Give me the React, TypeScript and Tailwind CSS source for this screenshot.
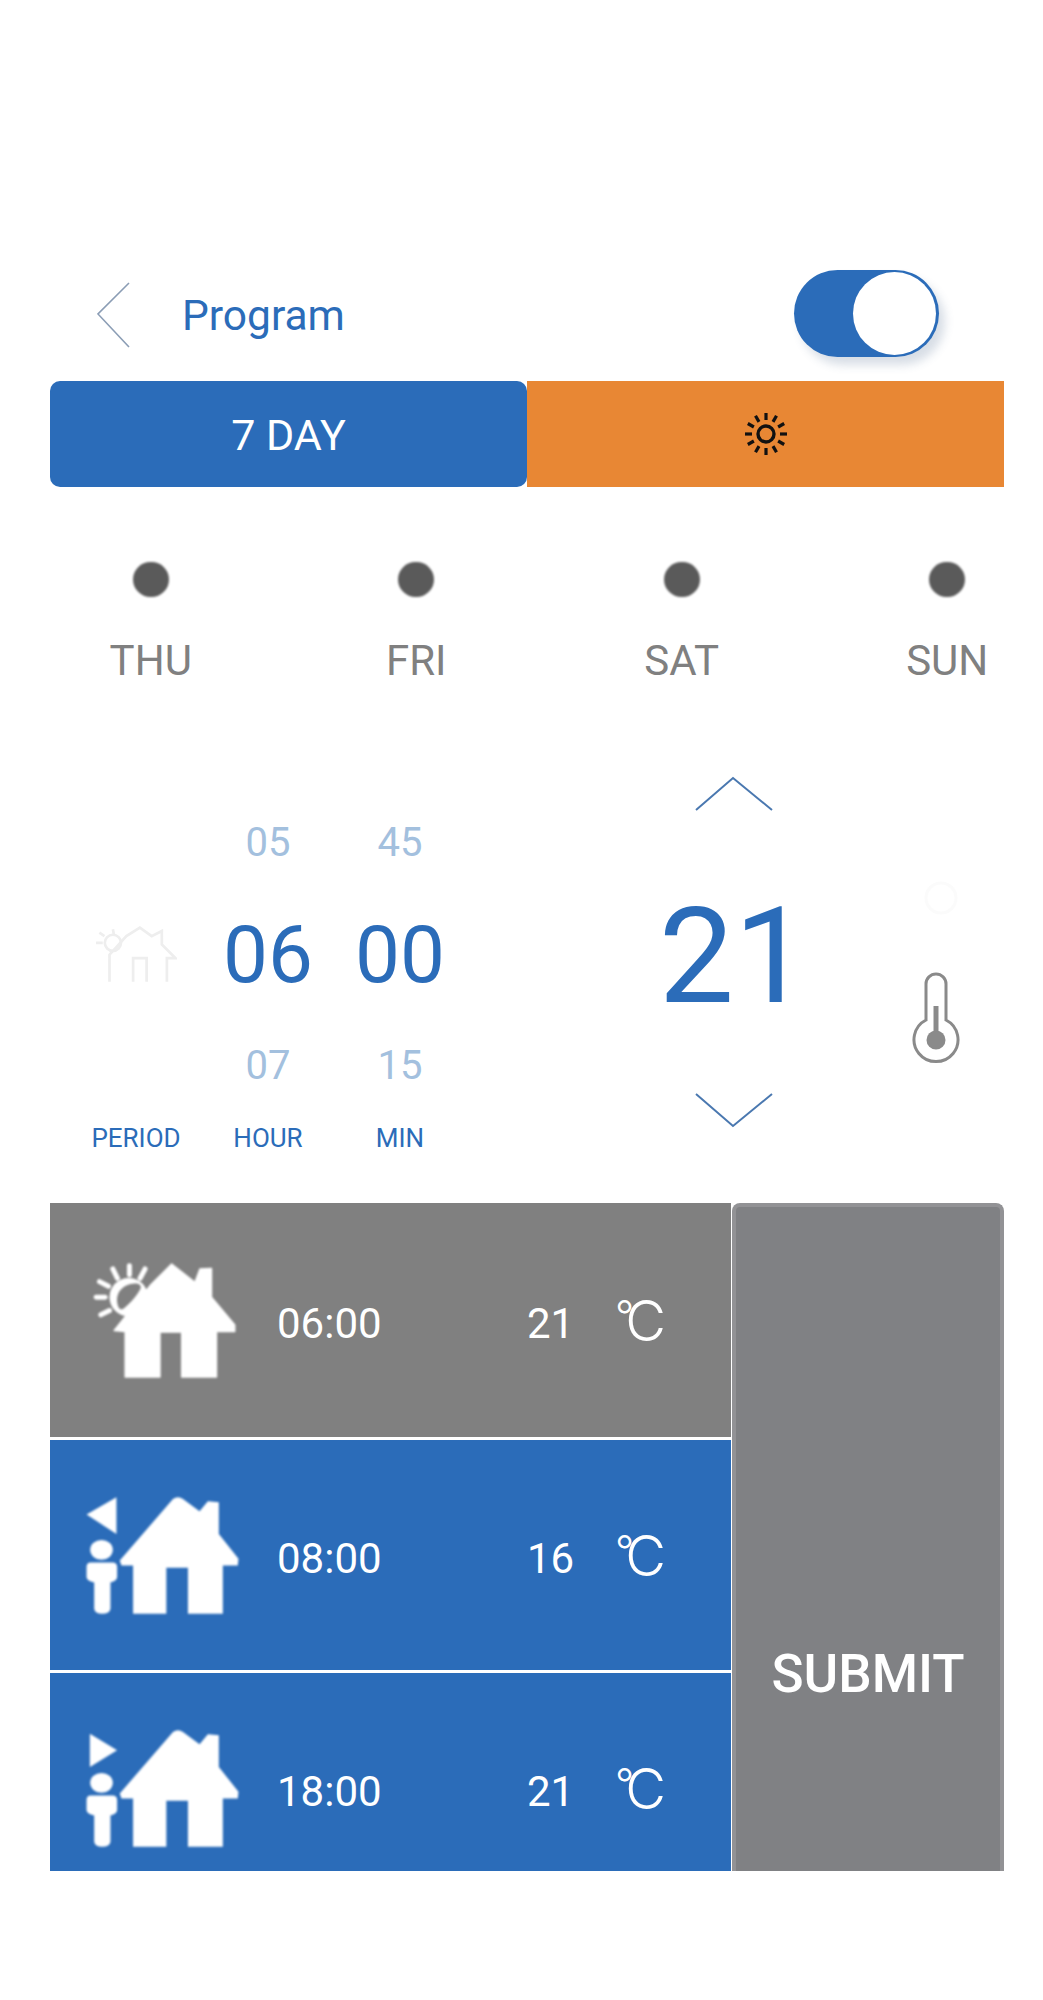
import React from "react";

const SunHouse = ({ gray }: { gray: string }) => (
  <svg viewBox="150 210 450 370" width="150" height="123" className="blur-[0.8px] shrink-0">
    <g stroke="#fff" strokeWidth="15" strokeLinecap="round">
      <line x1="168" y1="325" x2="195" y2="325" />
      <line x1="178" y1="278" x2="205" y2="292" />
      <line x1="218" y1="240" x2="232" y2="268" />
      <line x1="268" y1="230" x2="268" y2="258" />
      <line x1="315" y1="240" x2="300" y2="268" />
      <line x1="182" y1="378" x2="208" y2="365" />
    </g>
    <circle cx="266" cy="325" r="58" fill="#fff" />
    <path d="M232 345 C225 310 250 285 285 284 C300 284 306 292 300 302 C290 322 265 348 250 360 C240 365 234 355 232 345Z" fill={gray} />
    <path d="M222 425 L330 290 L395 225 L465 280 L480 240 L515 238 L515 325 L585 408 L585 428 L530 428 L530 565 L425 565 L425 430 L360 430 L360 565 L255 565 L255 428 Z" fill="#fff" stroke="#fff" strokeWidth="4" strokeLinejoin="round" />
  </svg>
);

const PersonHouse = ({ dir }: { dir: "left" | "right" }) => (
  <svg viewBox="130 190 480 370" width="160" height="123" className="blur-[0.8px] shrink-0">
    <path
      d={dir === "left" ? "M140 252 L230 200 L230 310 Z" : "M150 210 L232 260 L150 310 Z"}
      fill="#fff"
    />
    <ellipse cx="185" cy="358" rx="34" ry="30" fill="#fff" />
    <path d="M152 396 L218 396 Q232 396 232 410 L232 440 Q232 452 212 456 L212 535 Q210 550 187 550 Q165 550 163 535 L163 456 Q140 452 140 440 L140 410 Q140 396 152 396Z" fill="#fff" />
    <path d="M240 390 L400 205 Q415 195 430 205 L480 242 L505 212 L538 215 L538 310 L597 385 L595 405 L550 405 L550 550 L445 550 L445 412 L380 412 L380 550 L280 550 L280 405 L245 405 Z" fill="#fff" strokeLinejoin="round" />
  </svg>
);

const Row = ({ bg, icon, time, temp, h }: { bg: string; icon: React.ReactNode; time: string; temp: string; h: string }) => (
  <div className={`${h} ${bg} flex items-center`}>
    <div className="w-[227px] pl-[33px] shrink-0">{icon}</div>
    <div className="w-[250px] text-[42px] leading-none shrink-0 mt-[8px]">{time}</div>
    <div className="w-[90px] text-[42px] leading-none shrink-0 mt-[8px]">{temp}</div>
    <div className="flex items-start font-[Inter,sans-serif] font-light leading-none mt-[2px]">
      <span className="text-[42px] leading-none mt-[2px] ml-[-2px] tracking-[-9px]">°</span>
      <span className="text-[56px] leading-none">C</span>
    </div>
  </div>
);

const Sun = () => (
  <svg viewBox="0 0 44 44" width="44" height="44">
    <circle cx="22" cy="22" r="8" fill="none" stroke="#111" strokeWidth="3.4" />
    <g stroke="#111" strokeWidth="3.2">
      {[0, 30, 60, 90, 120, 150, 180, 210, 240, 270, 300, 330].map((a) => {
        const r = (a * Math.PI) / 180;
        return (
          <line
            key={a}
            x1={22 + 14 * Math.cos(r)}
            y1={22 + 14 * Math.sin(r)}
            x2={22 + 21 * Math.cos(r)}
            y2={22 + 21 * Math.sin(r)}
          />
        );
      })}
    </g>
  </svg>
);

const TimeCol = ({ top, mid, bot, label }: { top?: string; mid: React.ReactNode; bot?: string; label: string }) => (
  <div className="w-[132px] flex flex-col items-center text-[#2b6cb9]">
    <div className="h-[110px] flex items-center text-[40px] text-[#a3c0de]">{top}</div>
    <div className="h-[114px] flex items-center text-[80px] font-[450] leading-none">{mid}</div>
    <div className="h-[108px] flex items-center text-[40px] text-[#a3c0de]">{bot}</div>
    <div className="h-[36px] flex items-center text-[26px]">{label}</div>
  </div>
);

export default function App() {
  return (
    <div className="h-[2000px] bg-white font-[Roboto,sans-serif] overflow-hidden">
      <div className="ml-[50px] w-[954px] pt-[270px]">
        {/* Header */}
        <div className="h-[87px] flex items-center">
          <svg viewBox="0 0 34 66" width="34" height="66" className="ml-[47px] mt-[3px]">
            <polyline points="32,1 1,32 32,65" fill="none" stroke="#8b9db5" strokeWidth="1.6" />
          </svg>
          <div className="ml-[51px] mt-[5px] text-[42.5px] leading-none text-[#2b6cb9]">Program</div>
          <div className="ml-auto mr-[65px] w-[145px] h-[87px] rounded-full bg-[#2b6cb9] flex items-center justify-end pr-[3px] shadow-[6px_8px_10px_rgba(60,90,130,0.2)]">
            <div className="w-[83px] h-[83px] rounded-full bg-white" />
          </div>
        </div>

        {/* Tabs */}
        <div className="mt-[24px] h-[106px] flex">
          <div className="w-[477px] bg-[#2b6cb9] rounded-[10px] flex items-center justify-center text-white text-[43px] pt-[2px]">7 DAY</div>
          <div className="w-[477px] bg-[#e88734] flex items-center justify-center"><Sun /></div>
        </div>

        {/* Days */}
        <div className="mt-[75px] pl-[44px] flex gap-[152px]">
          {["THU", "FRI", "SAT", "SUN"].map((d) => (
            <div key={d} className="w-[114px] flex flex-col items-center">
              <div className="w-[36px] h-[35px] rounded-full bg-[#5a5a5a] blur-[0.8px]" />
              <div className="mt-[40px] text-[42px] leading-[48px] text-[#808080]">{d}</div>
            </div>
          ))}
        </div>

        {/* Picker */}
        <div className="mt-[91px] h-[387px] flex">
          <div className="pl-[20px] pt-[12px] flex">
            <TimeCol
              mid={
                <svg viewBox="122 955 243 172" width="82" height="68" fill="none" stroke="#eeeeee" strokeWidth="8">
                  <path d="M165 1120 L165 1040 L215 985 L255 960 L290 985 L320 970 L320 1010 L360 1050 L335 1050 L335 1120 M235 1120 L235 1050 L275 1050 L275 1120" />
                  <circle cx="175" cy="1005" r="24" />
                  <path d="M125 1005 L145 1005 M135 975 L150 985 M175 965 L178 980" />
                </svg>
              }
              label="PERIOD"
            />
            <TimeCol top="05" mid="06" bot="07" label="HOUR" />
            <TimeCol top="45" mid="00" bot="15" label="MIN" />
          </div>
          <div className="ml-[168px] w-[200px] flex flex-col items-center">
            <svg viewBox="0 0 80 36" width="80" height="36">
              <polyline points="2,34 39,2 78,34" fill="none" stroke="#4a78b0" strokeWidth="2" />
            </svg>
            <div className="h-[280px] pt-[10px] flex items-center text-[134px] leading-none text-[#2b6cb9]">21</div>
            <svg viewBox="0 0 80 36" width="80" height="36">
              <polyline points="2,2 39,34 78,2" fill="none" stroke="#4a78b0" strokeWidth="2" />
            </svg>
          </div>
          <div className="ml-[72px] w-[60px] flex flex-col items-center">
            <svg viewBox="0 0 40 40" width="40" height="40" className="mt-[102px] ml-[10px]">
              <circle cx="20" cy="20" r="15" fill="none" stroke="#fbfbfb" strokeWidth="3" />
            </svg>
            <svg viewBox="0 0 50 96" width="50" height="96" className="mt-[52px]" fill="none">
              <path d="M15 50 L15 14 A10 10 0 0 1 35 14 L35 50 A22 22 0 1 1 15 50Z" stroke="#8a8a8a" strokeWidth="3" />
              <line x1="25" y1="36" x2="25" y2="68" stroke="#8a8a8a" strokeWidth="5" />
              <circle cx="25" cy="70" r="9.5" fill="#8a8a8a" />
            </svg>
          </div>
        </div>

        {/* Schedule */}
        <div className="mt-[40px] h-[668px] flex text-white">
          <div className="w-[681px] flex flex-col">
            <Row h="h-[234px]" bg="bg-[#808080]" icon={<div className="ml-[7px]"><SunHouse gray="#808080" /></div>} time="06:00" temp="21" />
            <div className="h-[3px] bg-white" />
            <Row h="h-[230px]" bg="bg-[#2b6cb9]" icon={<PersonHouse dir="left" />} time="08:00" temp="16" />
            <div className="h-[3px] bg-white" />
            <div className="h-[198px] overflow-hidden bg-[#2b6cb9]">
              <Row h="h-[230px]" bg="bg-[#2b6cb9]" icon={<PersonHouse dir="right" />} time="18:00" temp="21" />
            </div>
          </div>
          <button className="ml-[1px] w-[272px] bg-[#808184] border-x-[4px] border-t-[4px] border-[#929295] rounded-t-[8px] flex items-center justify-center pt-[272px] text-[53px] font-medium text-white">
            SUBMIT
          </button>
        </div>
      </div>
    </div>
  );
}
